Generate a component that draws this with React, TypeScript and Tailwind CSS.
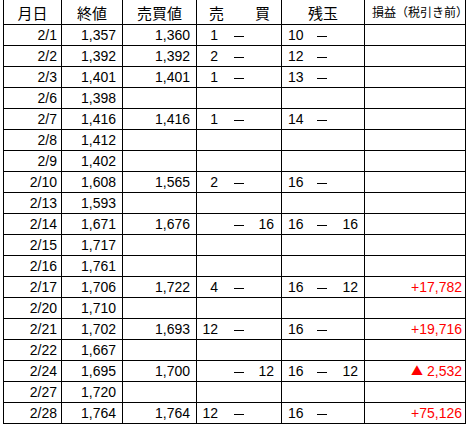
import React from "react";

type Row = {
  d: string;
  c: string;
  t?: string;
  s?: string;
  b?: string;
  pl?: string;
  pr?: string;
  p?: string;
};

const rows: Row[] = [
  { d: "2/1", c: "1,357", t: "1,360", s: "1", pl: "10" },
  { d: "2/2", c: "1,392", t: "1,392", s: "2", pl: "12" },
  { d: "2/3", c: "1,401", t: "1,401", s: "1", pl: "13" },
  { d: "2/6", c: "1,398" },
  { d: "2/7", c: "1,416", t: "1,416", s: "1", pl: "14" },
  { d: "2/8", c: "1,412" },
  { d: "2/9", c: "1,402" },
  { d: "2/10", c: "1,608", t: "1,565", s: "2", pl: "16" },
  { d: "2/13", c: "1,593" },
  { d: "2/14", c: "1,671", t: "1,676", b: "16", pl: "16", pr: "16" },
  { d: "2/15", c: "1,717" },
  { d: "2/16", c: "1,761" },
  { d: "2/17", c: "1,706", t: "1,722", s: "4", pl: "16", pr: "12", p: "+17,782" },
  { d: "2/20", c: "1,710" },
  { d: "2/21", c: "1,702", t: "1,693", s: "12", pl: "16", p: "+19,716" },
  { d: "2/22", c: "1,667" },
  { d: "2/24", c: "1,695", t: "1,700", b: "12", pl: "16", pr: "12", p: "▲ 2,532" },
  { d: "2/27", c: "1,720" },
  { d: "2/28", c: "1,764", t: "1,764", s: "12", pl: "16", p: "+75,126" },
];

const cell = "border-r border-b border-black";
const cols = "grid grid-cols-[58px_61px_74px_85px_83px_101px]";

const Dash = () => <span className="inline-block w-[10px] h-[1px] bg-black translate-y-[1px]" />;

export default function App() {
  return (
    <div className="bg-white w-[469px] h-[428px]">
      <div
        className="ml-[3px] w-[463px] border-l border-black text-black text-[14px]"
        style={{ fontFamily: '"Liberation Sans", Arial, "Noto Sans CJK JP", sans-serif' }}
      >
        <div
          className={`${cols} h-[25px] text-[15px]`}
          style={{ fontFamily: '"Noto Sans CJK JP", sans-serif' }}
        >
          <div className={`${cell} flex items-center justify-center leading-none`}>月日</div>
          <div className={`${cell} flex items-center justify-center leading-none`}>終値</div>
          <div className={`${cell} flex items-center justify-center leading-none`}>売買値</div>
          <div className={`${cell} flex items-center leading-none`}>
            <span className="ml-[12px]">売</span>
            <span className="ml-[31px]">買</span>
          </div>
          <div className={`${cell} flex items-center justify-center leading-none`}>残玉</div>
          <div className={`${cell} flex items-center pl-[7px] text-[12px] leading-none whitespace-nowrap`}>
            損益（税引き前）
          </div>
        </div>
        {rows.map((r) => (
          <div key={r.d} className={`${cols} h-[21px] leading-[20px]`}>
            <div className={`${cell} text-right pr-[4px]`}>{r.d}</div>
            <div className={`${cell} text-right pr-[6px]`}>{r.c}</div>
            <div className={`${cell} text-right pr-[6px]`}>{r.t ?? ""}</div>
            <div className={`${cell} flex items-center`}>
              {r.t ? (
                <>
                  <span className="w-[21px] text-right">{r.s ?? ""}</span>
                  <span className="ml-[16px] flex items-center">
                    <Dash />
                  </span>
                  <span className="flex-1 text-right pr-[7px]">{r.b ?? ""}</span>
                </>
              ) : null}
            </div>
            <div className={`${cell} flex items-center`}>
              {r.pl ? (
                <>
                  <span className="w-[22px] pl-[6px]">{r.pl}</span>
                  <span className="ml-[13px] flex items-center">
                    <Dash />
                  </span>
                  <span className="flex-1 text-right pr-[6px]">{r.pr ?? ""}</span>
                </>
              ) : null}
            </div>
            <div className={`${cell} text-right pr-[3px] text-[#ff0000] whitespace-nowrap`}>
              {r.p?.startsWith("▲") ? (
                <>
                  <span className="text-[12px]" style={{ fontFamily: '"Noto Sans CJK JP", sans-serif' }}>
                    ▲
                  </span>{" "}
                  {r.p.slice(2)}
                </>
              ) : (
                r.p ?? ""
              )}
            </div>
          </div>
        ))}
      </div>
    </div>
  );
}
